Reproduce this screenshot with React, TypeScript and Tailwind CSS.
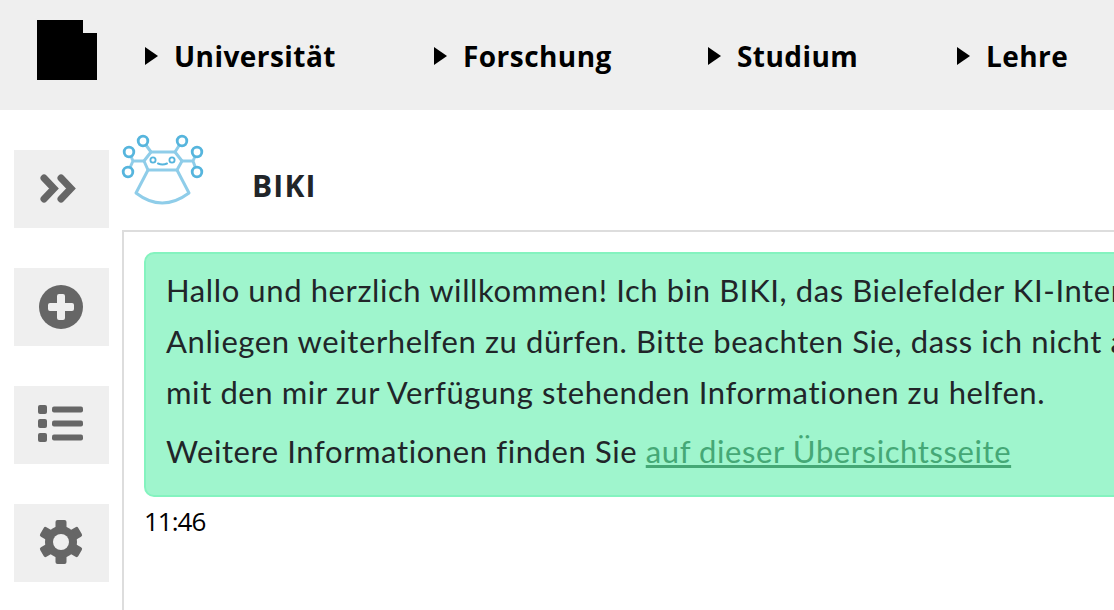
const NAV = [
    { label: 'Universität', width: 'w-[289px]' },
    { label: 'Forschung', width: 'w-[274px]' },
    { label: 'Studium', width: 'w-[249px]' },
    { label: 'Lehre', width: 'w-auto' },
];

function Logo() {
    return (
        <svg width="60" height="60" viewBox="0 0 60 60" className="shrink-0 mb-[10px]">
            <polygon points="0,0 46,0 46,13 60,13 60,60 0,60" fill="#000" />
        </svg>
    );
}

function Biki() {
    return (
        <svg width="84" height="80" viewBox="0 0 84 80" fill="none" className="shrink-0 block">
            <g stroke="#8fcde9" strokeWidth="3" strokeLinejoin="round" strokeLinecap="round">
                <path d="M31 22 L55 22 L62 31 L57 40 L28 40 L24 31 Z" />
                <path d="M23 11 L31 22 M62 11 L55 22 M24 31 L13 31 M13 31 L9 22 M13 31 L8 42 M62 31 L73 31 M73 31 L77 22 M73 31 L77 42" />
                <path d="M28 40 L16 63 Q42 83 69 63 L57 40" />
            </g>
            <g stroke="#56b5dd" strokeWidth="2.800" fill="#fff">
                <circle cx="23" cy="11" r="4.800" />
                <circle cx="62" cy="11" r="4.800" />
                <circle cx="9" cy="22" r="4.800" />
                <circle cx="77" cy="22" r="4.800" />
                <circle cx="8" cy="42" r="4.800" />
                <circle cx="77" cy="42" r="4.800" />
            </g>
            <g stroke="#56b5dd" strokeWidth="1.800">
                <circle cx="33" cy="30" r="2.600" />
                <circle cx="52" cy="30" r="2.600" />
                <path d="M38 33.500 Q42.500 35.500 47 33.500" strokeWidth="2" strokeLinecap="round" />
            </g>
        </svg>
    );
}

function SideButton({ children }: { children: React.ReactNode }) {
    return <button className="w-[95px] h-[78px] bg-[#efefef] flex items-center justify-center">{children}</button>;
}

export default function App() {
    return (
        <div className="w-[1114px] h-[610px] overflow-hidden bg-white text-[#212529] font-['Open_Sans',sans-serif]">
            <header className="h-[110px] bg-[#efefef] flex items-center pl-[37px]">
                <Logo />
                <nav className="flex items-center pl-[48px] pt-[1px] text-black whitespace-nowrap">
                    {NAV.map(item => (
                        <a key={item.label} className={`flex items-center gap-[16px] text-[28px] font-bold tracking-[0.45px] ${item.width}`}>
                            <span className="w-0 h-0 border-y-[9px] border-y-transparent border-l-[13px] border-l-black" />
                            {item.label}
                        </a>
                    ))}
                </nav>
            </header>

            <div className="flex">
                <aside className="w-[122px] shrink-0 pl-[14px] pt-[40px] flex flex-col gap-[40px]">
                    <SideButton>
                        <svg width="36" height="29" viewBox="0 0 36 29" fill="none" stroke="#666" strokeWidth="7" strokeLinecap="round" strokeLinejoin="miter" className="mr-[8px] mb-[2px]">
                            <path d="M4 4 L14 14.500 L4 25" />
                            <path d="M21 4 L31 14.500 L21 25" />
                        </svg>
                    </SideButton>
                    <SideButton>
                        <svg width="44" height="44" viewBox="0 0 44 44" className="mr-[2px]">
                            <circle cx="22" cy="22" r="22" fill="#666" />
                            <path d="M18 11q0-2 2-2h4q2 0 2 2v7h7q2 0 2 2v4q0 2-2 2h-7v7q0 2-2 2h-4q-2 0-2-2v-7h-7q-2 0-2-2v-4q0-2 2-2h7z" fill="#efefef" />
                        </svg>
                    </SideButton>
                    <SideButton>
                        <svg width="46" height="37" viewBox="0 0 46 37" fill="#666" className="mr-[1px] mb-[3px]">
                            <rect x="0" y="0" width="9" height="9" rx="2" />
                            <rect x="0" y="14" width="9" height="9" rx="2" />
                            <rect x="0" y="28" width="9" height="9" rx="2" />
                            <rect x="14" y="1.500" width="31" height="6" rx="2" />
                            <rect x="14" y="15.500" width="31" height="6" rx="2" />
                            <rect x="14" y="29.500" width="31" height="6" rx="2" />
                        </svg>
                    </SideButton>
                    <SideButton>
                        <svg width="44" height="44" viewBox="-22 -22 44 44" fill="#666" className="mr-[2px] mb-[2px]">
                            {[0, 60, 120, 180, 240, 300].map(a => (
                                <rect key={a} x="-5.500" y="-22" width="11" height="12" rx="2" transform={`rotate(${a})`} />
                            ))}
                            <circle r="16" />
                            <circle r="8" fill="#efefef" />
                        </svg>
                    </SideButton>
                </aside>

                <main className="flex-1 min-w-0">
                    <div className="h-[120px] flex -ml-[2px]">
                        <div className="pt-[20px]"><Biki /></div>
                        <h1 className="pl-[48px] pt-[58px] text-[30px] font-bold leading-[36px] tracking-[1.2px]">BIKI</h1>
                    </div>
                    <section className="border-l-2 border-t-2 border-[#dddddd] h-[400px] pl-[20px] pt-[20px]">
                        <div className="w-[1100px] h-[245px] bg-[#9ff5cd] border-2 border-[#84f3bf] rounded-[10px] pl-[20px] pt-[11px] font-['Lato',sans-serif] text-[31px] tracking-[0.6px] leading-[51px] whitespace-nowrap">
                            <p>Hallo und herzlich willkommen! Ich bin BIKI, das Bielefelder KI-Interface</p>
                            <p>Anliegen weiterhelfen zu dürfen. Bitte beachten Sie, dass ich nicht alles</p>
                            <p>mit den mir zur Verfügung stehenden Informationen zu helfen.</p>
                            <p className="mt-[8px]">
                                Weitere Informationen finden Sie <a className="underline text-[#45a876]">auf dieser Übersichtsseite</a>
                            </p>
                        </div>
                        <div className="pt-[4px] text-[26px] font-medium tracking-[-1px] leading-[40px] text-black">11:46</div>
                    </section>
                </main>
            </div>
        </div>
    );
}
